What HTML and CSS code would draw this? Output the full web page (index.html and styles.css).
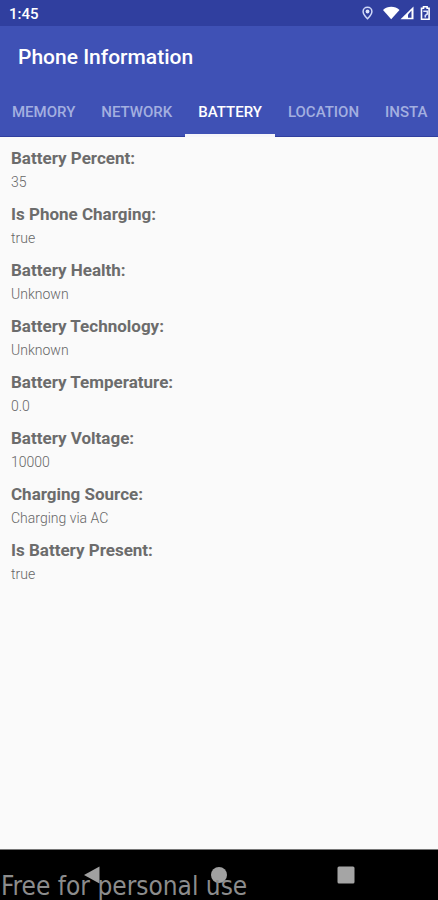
FILE: index.html
```html
<!DOCTYPE html>
<html lang="en">
<head>
<meta charset="utf-8">
<meta name="viewport" content="width=device-width, initial-scale=1">
<title>Phone Information</title>
<link rel="stylesheet" href="styles.css">
</head>
<body>
<div class="status-bar">
  <span class="clock">1:45</span>
  <svg class="status-icons" width="70" height="18" viewBox="0 0 70 18" aria-hidden="true">
    <path d="M7.500 3.200c-2.600 0-4.400 1.900-4.400 4.200 0 2.900 4.400 7.400 4.400 7.400s4.400-4.500 4.400-7.400c0-2.300-1.800-4.200-4.400-4.200z" fill="none" stroke="#cfd8f8" stroke-width="1.500"/>
    <circle cx="7.500" cy="7.500" r="1.900" fill="#dfe5fb"/>
    <path d="M23 6C27.500 1.800 35 1.800 39.500 6L31.200 15.300z" fill="#fff"/>
    <path d="M40.500 15.300L53.500 2.500v12.800z" fill="#fff"/>
    <path d="M48 10.500L51.500 6.500v7.300H48z" fill="#303f9f"/>
    <path d="M61.500 4.300h2V2.800h3.600v1.500h2v11h-7.600z" fill="#303f9f" stroke="#fff" stroke-width="1.600"/>
    <path d="M63.300 7.200h4v3l-2 1.200v2.200" fill="none" stroke="#dfe5fb" stroke-width="1.500"/>
  </svg>
</div>
<header class="app-bar">
  <h1 class="title">Phone Information</h1>
  <nav class="tabs" aria-label="Sections">
    <a class="tab" href="#memory">MEMORY</a>
    <a class="tab" href="#network">NETWORK</a>
    <a class="tab active" href="#battery" aria-current="page">BATTERY</a>
    <a class="tab" href="#location">LOCATION</a>
    <a class="tab" href="#insta">INSTA</a>
  </nav>
</header>
<main class="content" id="battery">
  <dl class="details">
    <div class="item"><dt>Battery Percent:</dt><dd>35</dd></div>
    <div class="item"><dt>Is Phone Charging:</dt><dd>true</dd></div>
    <div class="item"><dt>Battery Health:</dt><dd>Unknown</dd></div>
    <div class="item"><dt>Battery Technology:</dt><dd>Unknown</dd></div>
    <div class="item"><dt>Battery Temperature:</dt><dd>0.0</dd></div>
    <div class="item"><dt>Battery Voltage:</dt><dd>10000</dd></div>
    <div class="item"><dt>Charging Source:</dt><dd>Charging via AC</dd></div>
    <div class="item"><dt>Is Battery Present:</dt><dd>true</dd></div>
  </dl>
</main>
<footer class="nav-bar">
  <button class="nav-button" type="button" aria-label="Back">
    <svg width="18" height="18" viewBox="0 0 18 18"><path d="M1 9L16.500 .500v17z" fill="#a0a0a0"/></svg>
  </button>
  <button class="nav-button" type="button" aria-label="Home">
    <svg width="18" height="18" viewBox="0 0 18 18"><circle cx="9" cy="9" r="8" fill="#a0a0a0"/></svg>
  </button>
  <button class="nav-button" type="button" aria-label="Recent apps">
    <svg width="18" height="18" viewBox="0 0 18 18"><rect x=".500" y=".500" width="17" height="17" rx="1.500" fill="#a5a5a5"/></svg>
  </button>
  <span class="watermark">Free for personal use</span>
</footer>
</body>
</html>
```
FILE: styles.css
```css
* {
  box-sizing: border-box;
}

body {
  margin: 0;
  min-height: 100vh;
  display: flex;
  flex-direction: column;
  overflow-x: hidden;
  background: #fafafa;
  font-family: Roboto, "Liberation Sans", sans-serif;
}

.status-bar {
  display: flex;
  align-items: center;
  justify-content: space-between;
  height: 26px;
  padding: 2px 8px 0 9px;
  background: #303f9f;
  color: #fff;
}

.status-icons {
  margin-bottom: 2px;
}

.clock {
  font-size: 15px;
  font-weight: 500;
  line-height: 24px;
}

.app-bar {
  background: #3f51b5;
  box-shadow: inset 0 -1px #303f9f;
}

.title {
  margin: 0;
  padding: 0 18px;
  font-size: 21px;
  font-weight: 500;
  line-height: 62px;
  color: #fff;
}

.tabs {
  display: flex;
  overflow: hidden;
}

.tab {
  flex: none;
  height: 49px;
  padding: 0 13px;
  border-bottom: 3px solid transparent;
  font-size: 15px;
  font-weight: 500;
  line-height: 48px;
  color: #a3afe0;
  text-decoration: none;
}

.tab:first-child {
  padding-left: 12px;
}

.tab.active {
  color: #fff;
  border-bottom-color: #f5f5fa;
}

.content {
  flex: 1;
  padding: 9px 11px;
}

.details {
  margin: 0;
}

.item {
  padding-bottom: 8px;
}

dt {
  font-size: 17px;
  font-weight: 700;
  line-height: 24px;
  color: #6c6c6c;
}

dd {
  margin: 0;
  font-size: 14px;
  font-weight: 300;
  line-height: 24px;
  color: #666;
}

.nav-bar {
  position: relative;
  display: flex;
  justify-content: space-between;
  height: 51px;
  padding: 0 68px;
  overflow: hidden;
  background: #000;
  border-top: 1px solid #777;
}

.nav-button {
  display: flex;
  align-items: center;
  justify-content: center;
  width: 48px;
  padding: 0;
  border: 0;
  background: none;
}

.watermark {
  position: absolute;
  left: 1px;
  bottom: 0;
  font-family: "DejaVu Sans Condensed", "DejaVu Sans", sans-serif;
  font-size: 26px;
  line-height: 28px;
  color: #8c8c8c;
  white-space: nowrap;
  pointer-events: none;
}
```
